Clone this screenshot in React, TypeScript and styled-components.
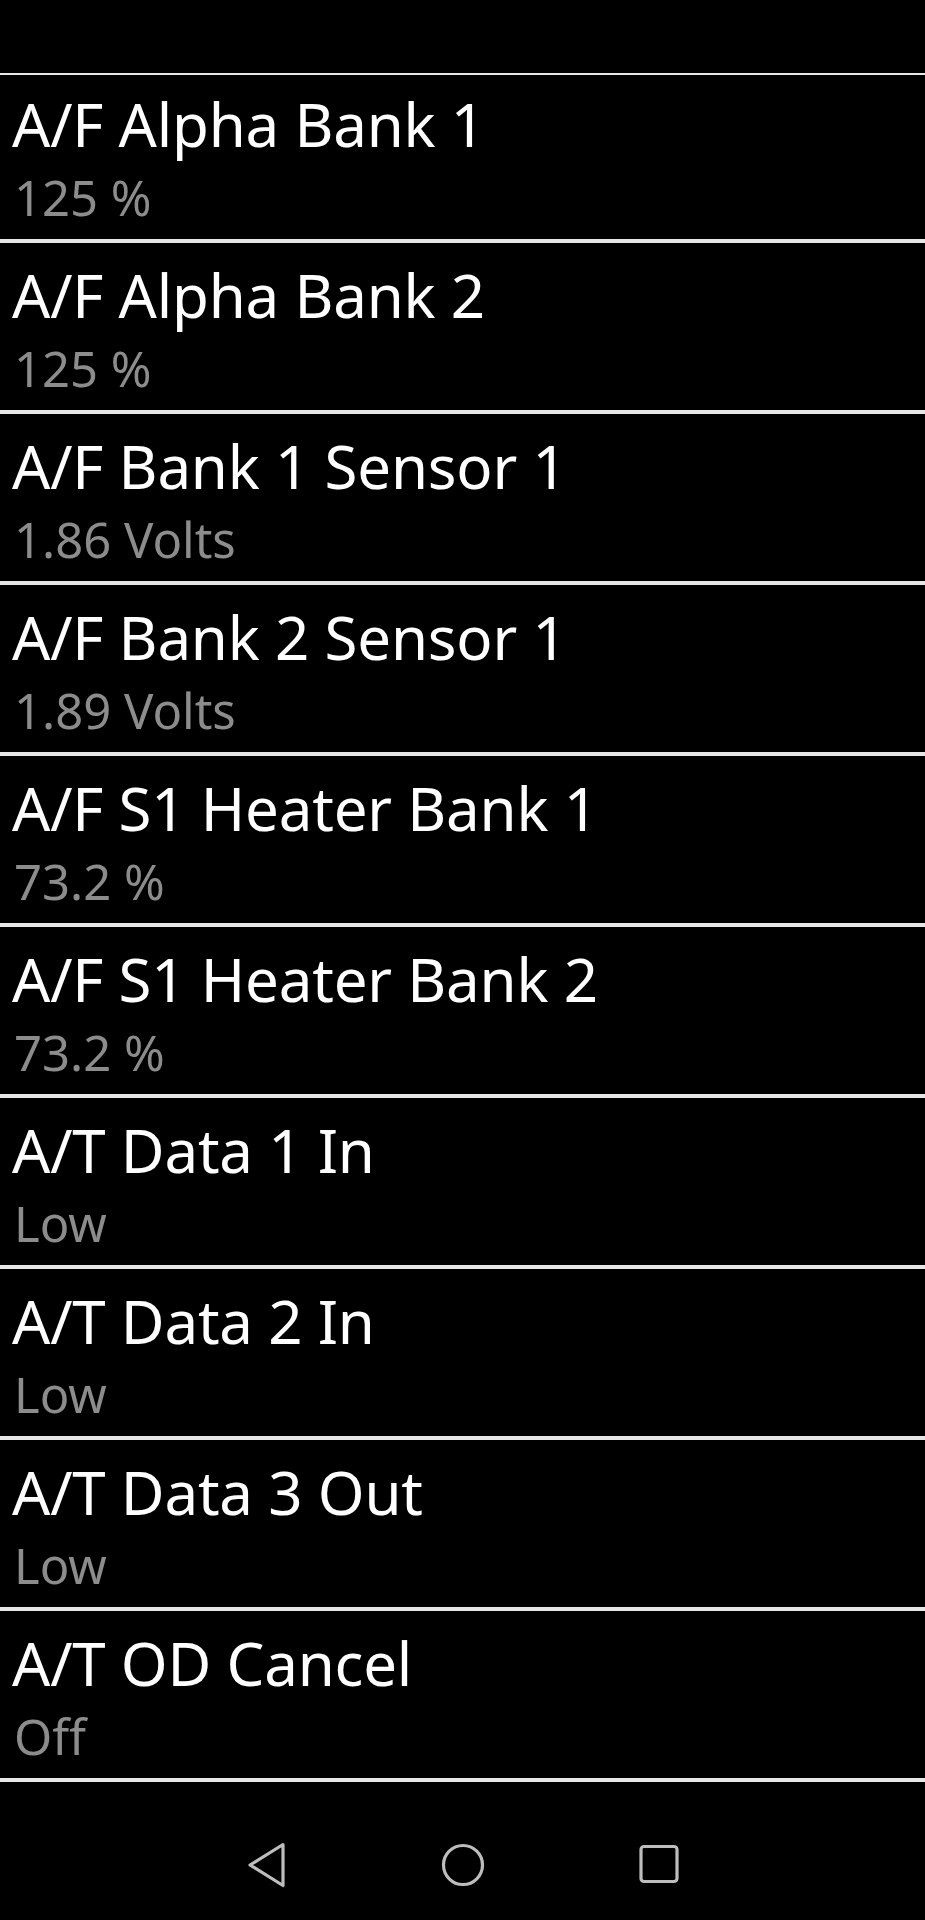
import styled, { createGlobalStyle } from 'styled-components'

const GlobalStyle = createGlobalStyle`
  html, body {
    margin: 0;
    padding: 0;
    background: #000;
  }
  body {
    font-family: "Noto Sans", "Open Sans", sans-serif;
  }
`

const READINGS = [
  { name: 'A/F Alpha Bank 1', value: '125 %' },
  { name: 'A/F Alpha Bank 2', value: '125 %' },
  { name: 'A/F Bank 1 Sensor 1', value: '1.86 Volts' },
  { name: 'A/F Bank 2 Sensor 1', value: '1.89 Volts' },
  { name: 'A/F S1 Heater Bank 1', value: '73.2 %' },
  { name: 'A/F S1 Heater Bank 2', value: '73.2 %' },
  { name: 'A/T Data 1 In', value: 'Low' },
  { name: 'A/T Data 2 In', value: 'Low' },
  { name: 'A/T Data 3 Out', value: 'Low' },
  { name: 'A/T OD Cancel', value: 'Off' },
]

function BackIcon() {
  return (
    <svg width="42" height="48" viewBox="0 0 42 48" fill="none">
      <path
        d="M37 3.5 L4 24 L37 44.5 Z"
        stroke="#bdbdbd"
        strokeWidth="3.2"
        strokeLinejoin="round"
      />
    </svg>
  )
}

function HomeIcon() {
  return (
    <svg width="46" height="48" viewBox="0 0 46 48" fill="none">
      <circle cx="23" cy="24" r="19.5" stroke="#bdbdbd" strokeWidth="3.2" />
    </svg>
  )
}

function RecentsIcon() {
  return (
    <svg width="42" height="48" viewBox="0 0 42 48" fill="none">
      <rect x="3" y="5.5" width="36" height="35" rx="3" stroke="#bdbdbd" strokeWidth="3.2" />
    </svg>
  )
}

export default function App() {
  return (
    <Screen>
      <GlobalStyle />
      <StatusArea />
      <ReadingList>
        {READINGS.map((r) => (
          <ReadingRow key={r.name}>
            <ReadingName>{r.name}</ReadingName>
            <ReadingValue>{r.value}</ReadingValue>
          </ReadingRow>
        ))}
      </ReadingList>
      <NavBar>
        <NavButton aria-label="Back"><BackIcon /></NavButton>
        <NavButton aria-label="Home"><HomeIcon /></NavButton>
        <NavButton aria-label="Recents"><RecentsIcon /></NavButton>
      </NavBar>
    </Screen>
  )
}

const Screen = styled.div`
  width: 925px;
  height: 1920px;
  display: flex;
  flex-direction: column;
  background: #000;
  overflow: hidden;
`

const StatusArea = styled.div`
  height: 73px;
  flex-shrink: 0;
`

const ReadingList = styled.div`
  flex: 1;
  overflow: hidden;
  border-top: 2px solid #e6e6e6;
  display: flex;
  flex-direction: column;
`

const ReadingRow = styled.div`
  box-sizing: border-box;
  flex-shrink: 0;
  height: 171px;
  border-top: 2px solid #e6e6e6;
  border-bottom: 2px solid #e6e6e6;
  padding: 0 0 8px 12px;
  display: flex;
  flex-direction: column;
  justify-content: flex-end;

  &:first-child {
    height: 166px;
    border-top: none;
  }

  &:last-child {
    height: 173px;
    border-bottom-width: 4px;
  }
`

const ReadingName = styled.div`
  color: #fff;
  font-size: 60px;
  line-height: 80px;
  letter-spacing: -0.2px;
  white-space: nowrap;
`

const ReadingValue = styled.div`
  color: #8c8c8c;
  font-size: 49px;
  line-height: 67px;
  padding-left: 2px;
  white-space: nowrap;
`

const NavBar = styled.div`
  height: 134px;
  flex-shrink: 0;
  box-sizing: border-box;
  padding-top: 55px;
  display: flex;
  justify-content: center;
  align-items: flex-start;
`

const NavButton = styled.div`
  width: 196px;
  height: 48px;
  display: flex;
  justify-content: center;
  align-items: center;
`
